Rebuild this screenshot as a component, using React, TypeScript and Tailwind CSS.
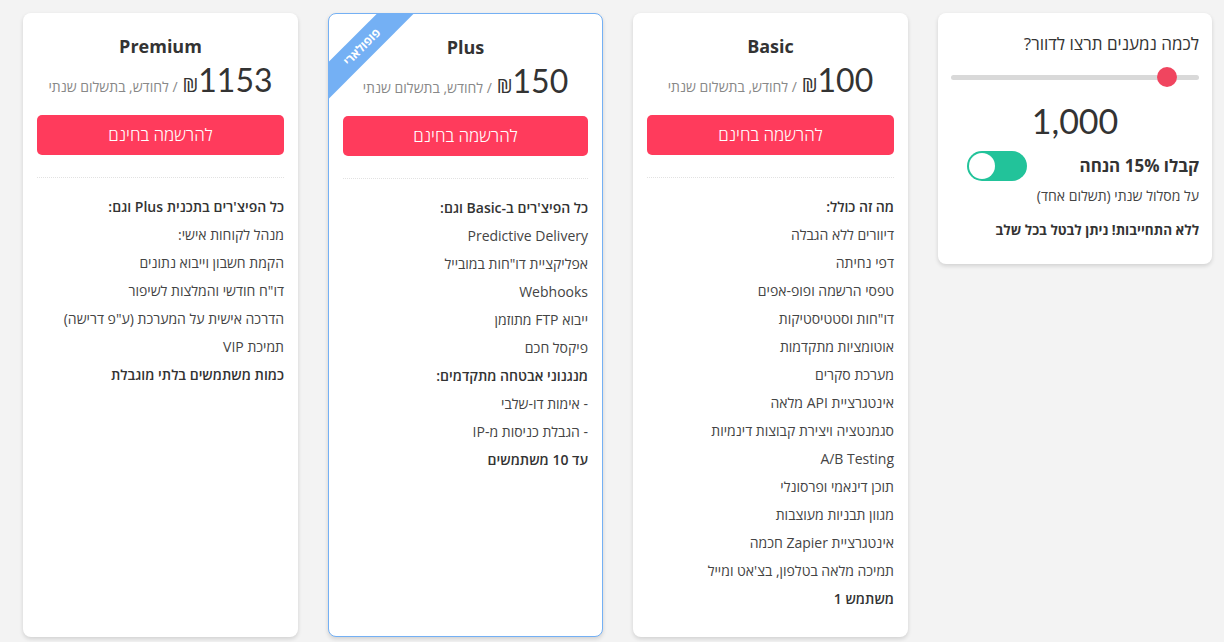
const font = { fontFamily: '"Open Sans", "Noto Sans", sans-serif' }

interface Plan {
  name: string
  price: string
  features: { text: string; bold?: boolean }[]
  popular?: boolean
}

const plans: Plan[] = [
  {
    name: 'Basic',
    price: '100',
    features: [
      { text: 'מה זה כולל:', bold: true },
      { text: 'דיוורים ללא הגבלה' },
      { text: 'דפי נחיתה' },
      { text: 'טפסי הרשמה ופופ-אפים' },
      { text: 'דו"חות וסטטיסטיקות' },
      { text: 'אוטומציות מתקדמות' },
      { text: 'מערכת סקרים' },
      { text: 'אינטגרציית API מלאה' },
      { text: 'סגמנטציה ויצירת קבוצות דינמיות' },
      { text: 'A/B Testing' },
      { text: 'תוכן דינאמי ופרסונלי' },
      { text: 'מגוון תבניות מעוצבות' },
      { text: 'אינטגרציית Zapier חכמה' },
      { text: "תמיכה מלאה בטלפון, בצ'אט ומייל" },
      { text: 'משתמש 1', bold: true },
    ],
  },
  {
    name: 'Plus',
    price: '150',
    popular: true,
    features: [
      { text: "כל הפיצ'רים ב-Basic וגם:", bold: true },
      { text: 'Predictive Delivery' },
      { text: 'אפליקציית דו"חות במובייל' },
      { text: 'Webhooks' },
      { text: 'ייבוא FTP מתוזמן' },
      { text: 'פיקסל חכם' },
      { text: 'מנגנוני אבטחה מתקדמים:', bold: true },
      { text: '- אימות דו-שלבי' },
      { text: '- הגבלת כניסות מ-IP' },
      { text: 'עד 10 משתמשים', bold: true },
    ],
  },
  {
    name: 'Premium',
    price: '1153',
    features: [
      { text: "כל הפיצ'רים בתכנית Plus וגם:", bold: true },
      { text: 'מנהל לקוחות אישי:' },
      { text: 'הקמת חשבון וייבוא נתונים' },
      { text: 'דו"ח חודשי והמלצות לשיפור' },
      { text: 'הדרכה אישית על המערכת (ע"פ דרישה)' },
      { text: 'תמיכת VIP' },
      { text: 'כמות משתמשים בלתי מוגבלת', bold: true },
    ],
  },
]

function SliderCard() {
  return (
    <div className="w-[274px] shrink-0 self-start bg-white rounded-lg shadow-[0_2px_4px_rgba(0,0,0,0.14)] px-[13px] pt-[19px] pb-[24px]">
      <div className="text-[17px] leading-6 text-[#333]">לכמה נמענים תרצו לדוור?</div>
      <div className="relative mt-[11px] h-[20px] flex items-center">
        <div className="w-full h-[5px] rounded-full bg-[#d9d9d9]" />
        <div className="absolute left-[206px] top-0 w-[20px] h-[20px] rounded-full bg-[#f0455f]" />
      </div>
      <div
        className="mt-[14px] text-center text-[34px] leading-[40px] text-[#333]"
        style={{ fontFamily: 'Lato, sans-serif' }}
      >
        1,000
      </div>
      <div className="mt-[10px] flex items-center justify-between pl-[16px]">
        <div className="text-[17px] font-bold text-[#333]">קבלו 15% הנחה</div>
        <div className="w-[60px] h-[30px] rounded-full bg-[#22c39a] flex items-center justify-end px-[2px]">
          <div className="w-[26px] h-[26px] rounded-full bg-white" />
        </div>
      </div>
      <div className="mt-[5px] text-[14px] leading-5 text-[#444]">על מסלול שנתי (תשלום אחד)</div>
      <div className="mt-[14px] text-[13.5px] leading-5 font-bold text-[#333]">ללא התחייבות! ניתן לבטל בכל שלב</div>
    </div>
  )
}

function PlanCard({ plan }: { plan: Plan }) {
  return (
    <div
      className={
        plan.popular
          ? 'relative overflow-hidden w-[275px] shrink-0 bg-white rounded-lg border border-[#74b0f4] shadow-[0_2px_4px_rgba(0,0,0,0.14)] px-[14px] pt-[20px] pb-[24px]'
          : 'relative overflow-hidden w-[275px] shrink-0 bg-white rounded-lg shadow-[0_2px_4px_rgba(0,0,0,0.14)] px-[14px] pt-[20px] pb-[24px]'
      }
    >
      {plan.popular && (
        <div className="absolute left-[-37px] top-[20px] w-[140px] h-[26px] -rotate-45 bg-[#74b0f4] flex items-center justify-center text-white text-[12px] font-bold">
          פופולארי
        </div>
      )}
      <div className="text-center text-[18px] leading-[26px] font-bold text-[#333]">{plan.name}</div>
      <div className="mt-[1px] flex items-baseline justify-center">
        <span className="text-[32px] leading-[40px] text-[#333]" style={{ fontFamily: 'Lato, sans-serif' }}>
          {plan.price}
        </span>
        <span className="text-[20px] text-[#333] ml-[5px]">₪</span>
        <span className="text-[14px] text-[#888]">/ לחודש, בתשלום שנתי</span>
      </div>
      <button className="mt-[15px] w-full h-[40px] rounded-[5px] bg-[#ff3b5c] text-white text-[17px] font-light">
        להרשמה בחינם
      </button>
      <div className="mt-[22px] border-t border-dotted border-[#e2e2e2]" />
      <ul className="mt-[15px]">
        {plan.features.map((f, i) => (
          <li
            key={i}
            className={
              f.bold
                ? 'text-[14px] leading-[28px] font-semibold text-[#333]'
                : 'text-[14px] leading-[28px] text-[#444]'
            }
          >
            {f.text}
          </li>
        ))}
      </ul>
    </div>
  )
}

export default function App() {
  return (
    <div dir="rtl" className="min-h-[642px] w-full bg-[#f3f3f3] pt-[13px] pr-[12px]" style={font}>
      <div className="flex items-stretch gap-[30px]">
        <SliderCard />
        {plans.map((p) => (
          <PlanCard key={p.name} plan={p} />
        ))}
      </div>
    </div>
  )
}
